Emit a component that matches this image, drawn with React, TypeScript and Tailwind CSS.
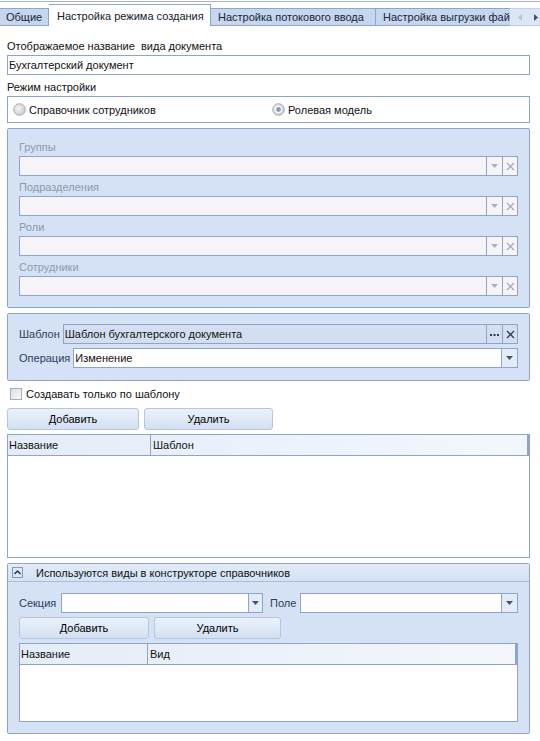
import React from 'react';

const DropArrow = ({ disabled }: { disabled?: boolean }) => (
  <svg width="7" height="4" viewBox="0 0 7 4">
    <path d="M0 0h7L3.5 4z" fill={disabled ? '#a3b0c6' : '#44536e'} />
  </svg>
);

const ClearX = ({ disabled }: { disabled?: boolean }) => (
  <svg width="9" height="9" viewBox="0 0 9 9">
    <path d="M1 1l7 7M8 1l-7 7" stroke={disabled ? '#9fadc4' : '#2f3c55'} strokeWidth="1.3" />
  </svg>
);

const Radio = ({ checked }: { checked?: boolean }) => (
  <svg width="13" height="13" viewBox="0 0 13 13">
    <defs>
      <radialGradient id={checked ? 'rg1' : 'rg0'} cx="0.4" cy="0.4" r="0.7">
        <stop offset="0" stopColor="#f4f4f4" />
        <stop offset="1" stopColor="#c4c8ce" />
      </radialGradient>
    </defs>
    <circle cx="6.5" cy="6.5" r="5.8" fill={`url(#${checked ? 'rg1' : 'rg0'})`} stroke="#a4acb8" strokeWidth="1" />
    {checked && <circle cx="6.5" cy="6.5" r="3.6" fill="#f8f9fb" />}
    {checked && <circle cx="6.5" cy="6.5" r="2.4" fill="#8b9ab3" />}
  </svg>
);

const DisabledCombo = () => (
  <div className="flex h-[20px] border border-[#8ea5c8] bg-[#f7f4f8]">
    <div className="flex-1" />
    <div className="flex w-[16px] items-center justify-center border-l border-[#8ea5c8]">
      <DropArrow disabled />
    </div>
    <div className="flex w-[15px] items-center justify-center border-l border-[#8ea5c8]">
      <ClearX disabled />
    </div>
  </div>
);

const Button = ({ label, w }: { label: string; w: string }) => (
  <div
    className={`flex h-[22px] ${w} items-center justify-center rounded-[3px] border border-[#b6c6de] bg-gradient-to-b from-[#eaf1fb] to-[#d3e0f2] text-black`}
  >
    {label}
  </div>
);

const GridHeader = ({ first, second, firstW }: { first: string; second: string; firstW: string }) => (
  <div className="flex h-[21px] border-b border-[#8ea5c8] bg-gradient-to-r from-[#e4ecf8] to-[#f3f7fd]">
    <div className={`${firstW} flex items-center border-r border-[#8ea5c8] pl-[1px]`}>{first}</div>
    <div className="flex flex-1 items-center pl-[2px]">{second}</div>
    <div className="w-[2px] bg-[#8ea5c8]" />
  </div>
);

export default function App() {
  const disabledLabels = ['Группы', 'Подразделения', 'Роли', 'Сотрудники'];

  return (
    <div className="h-[741px] w-[540px] overflow-hidden bg-white text-[11px] leading-[14px] text-[#111] font-['Liberation_Sans',Arial,sans-serif]">
      {/* tabs */}
      <div className="mt-[1px] flex h-[25px] items-end whitespace-nowrap border-t border-[#a8b2c0]">
        <div className="flex h-[18px] w-[49px] items-center border-r border-b border-t border-[#8ea6c8] bg-[#c5d6ee] pl-[6px] text-[#1b2537]">
          Общие
        </div>
        <div className="flex h-[22px] w-[162px] items-center border-r border-t border-[#8ea6c8] bg-white pl-[8px] text-[#111a2a]">
          Настройка режима создания
        </div>
        <div className="flex h-[18px] w-[165px] items-center border-r border-b border-t border-[#8ea6c8] bg-[#c5d6ee] pl-[7px] text-[#1b2537]">
          Настройка потокового ввода
        </div>
        <div className="flex h-[18px] w-[134px] items-center overflow-hidden border-b border-t border-[#8ea6c8] bg-[#c5d6ee] pl-[7px] text-[#1b2537]">
          Настройка выгрузки фай
        </div>
        <div className="flex h-[18px] flex-1 items-center justify-end gap-[12px] border-b border-t border-[#c4d2e6] bg-[#dbe6f5] pr-[2px]">
          <svg width="4" height="7" viewBox="0 0 4 7">
            <path d="M4 0v7L0 3.5z" fill="#b7c3d6" />
          </svg>
          <svg width="4" height="7" viewBox="0 0 4 7">
            <path d="M0 0v7l4-3.5z" fill="#3f4e6a" />
          </svg>
        </div>
      </div>

      <div className="flex flex-col px-[7px] pr-[10px]">
        <div className="mt-[13px] h-[14px]">Отображаемое название&nbsp; вида документа</div>
        <div className="mt-[2px] flex h-[20px] items-center border border-[#8ea5c8] pl-[1px]">Бухгалтерский документ</div>
        <div className="mt-[5px] h-[14px]">Режим настройки</div>
        <div className="mt-[2px] flex h-[27px] items-center border border-[#8ea5c8] pl-[5px]">
          <div className="flex w-[259px] items-center gap-[3px]">
            <Radio />
            <span>Справочник сотрудников</span>
          </div>
          <div className="flex items-center gap-[3px]">
            <Radio checked />
            <span>Ролевая модель</span>
          </div>
        </div>

        {/* roles panel (disabled) */}
        <div className="mt-[5px] flex h-[180px] flex-col rounded-[2px] border border-[#8ea5c8] bg-[#d5e1f5] pl-[11px] pr-[11px] pt-[11px]">
          {disabledLabels.map((l, i) => (
            <div key={l} className={i ? 'mt-[4px]' : ''}>
              <div className="h-[14px] text-[#8d99ab]">{l}</div>
              <div className="mt-[2px]">
                <DisabledCombo />
              </div>
            </div>
          ))}
        </div>

        {/* template panel */}
        <div className="mt-[5px] flex h-[68px] flex-col rounded-[2px] border border-[#8ea5c8] bg-[#d5e1f5] pl-[11px] pr-[11px] pt-[10px]">
          <div className="flex h-[20px] items-center gap-[3px]">
            <span className="text-[#2c3d58]">Шаблон</span>
            <div className="flex h-[20px] flex-1 border border-[#8ea5c8] bg-[#d3dff1]">
              <div className="flex flex-1 items-center pl-[1px]">Шаблон бухгалтерского документа</div>
              <div className="flex w-[16px] items-end justify-center border-l border-[#8ea5c8] pb-[7px]">
                <svg width="9" height="2" viewBox="0 0 9 2">
                  <rect x="0" y="0" width="2" height="2" fill="#2f3c55" />
                  <rect x="3.5" y="0" width="2" height="2" fill="#2f3c55" />
                  <rect x="7" y="0" width="2" height="2" fill="#2f3c55" />
                </svg>
              </div>
              <div className="flex w-[15px] items-center justify-center border-l border-[#8ea5c8]">
                <ClearX />
              </div>
            </div>
          </div>
          <div className="mt-[4px] flex h-[20px] items-center gap-[3px]">
            <span className="text-[#2c3d58]">Операция</span>
            <div className="flex h-[20px] flex-1 border border-[#8ea5c8] bg-white">
              <div className="flex flex-1 items-center pl-[1px]">Изменение</div>
              <div className="flex w-[16px] items-center justify-center border-l border-[#8ea5c8] bg-[#e3ebf7]">
                <DropArrow />
              </div>
            </div>
          </div>
        </div>

        <div className="mt-[6px] flex h-[14px] items-center gap-[4px] pl-[3px]">
          <div className="h-[12px] w-[12px] border border-[#a2abb9] bg-gradient-to-br from-[#dcdfe4] to-[#f7f8fa]" />
          <span>Создавать только по шаблону</span>
        </div>

        <div className="mt-[7px] flex gap-[5px]">
          <Button label="Добавить" w="w-[132px]" />
          <Button label="Удалить" w="w-[129px]" />
        </div>

        <div className="mt-[4px] flex h-[124px] flex-col border border-[#8ea5c8]">
          <GridHeader first="Название" second="Шаблон" firstW="w-[143px]" />
          <div className="flex-1 bg-white" />
        </div>

        {/* group */}
        <div className="mt-[5px] flex h-[171px] flex-col rounded-[2px] border border-[#8ea5c8] bg-[#d5e1f5]">
          <div className="flex h-[18px] items-center border-b border-[#a9bcd8] bg-gradient-to-b from-[#e2ebf8] to-[#d4e1f4] pl-[4px]">
            <svg width="11" height="11" viewBox="0 0 11 11">
              <rect x="0.5" y="0.5" width="10" height="10" fill="none" stroke="#3c4a62" strokeWidth="1" strokeDasharray="1 1" />
              <path d="M2.5 7l3-3 3 3" fill="none" stroke="#2a3850" strokeWidth="1.5" />
            </svg>
            <span className="ml-[13px]">Используются виды в конструкторе справочников</span>
          </div>
          <div className="flex flex-col pl-[11px] pr-[11px]">
            <div className="mt-[11px] flex h-[20px] items-center">
              <span className="w-[42px] text-[#2c3d58]">Секция</span>
              <div className="flex h-[20px] w-[202px] border border-[#8ea5c8] bg-white">
                <div className="flex-1" />
                <div className="flex w-[14px] items-center justify-center border-l border-[#8ea5c8] bg-[#e3ebf7]">
                  <DropArrow />
                </div>
              </div>
              <span className="ml-[7px] w-[30px] text-[#2c3d58]">Поле</span>
              <div className="flex h-[20px] flex-1 border border-[#8ea5c8] bg-white">
                <div className="flex-1" />
                <div className="flex w-[16px] items-center justify-center border-l border-[#8ea5c8] bg-[#e3ebf7]">
                  <DropArrow />
                </div>
              </div>
            </div>
            <div className="mt-[4px] flex gap-[5px]">
              <Button label="Добавить" w="w-[130px]" />
              <Button label="Удалить" w="w-[127px]" />
            </div>
            <div className="mt-[4px] flex h-[79px] flex-col border border-[#8ea5c8]">
              <GridHeader first="Название" second="Вид" firstW="w-[128px]" />
              <div className="flex-1 bg-white" />
            </div>
          </div>
        </div>
      </div>
    </div>
  );
}
